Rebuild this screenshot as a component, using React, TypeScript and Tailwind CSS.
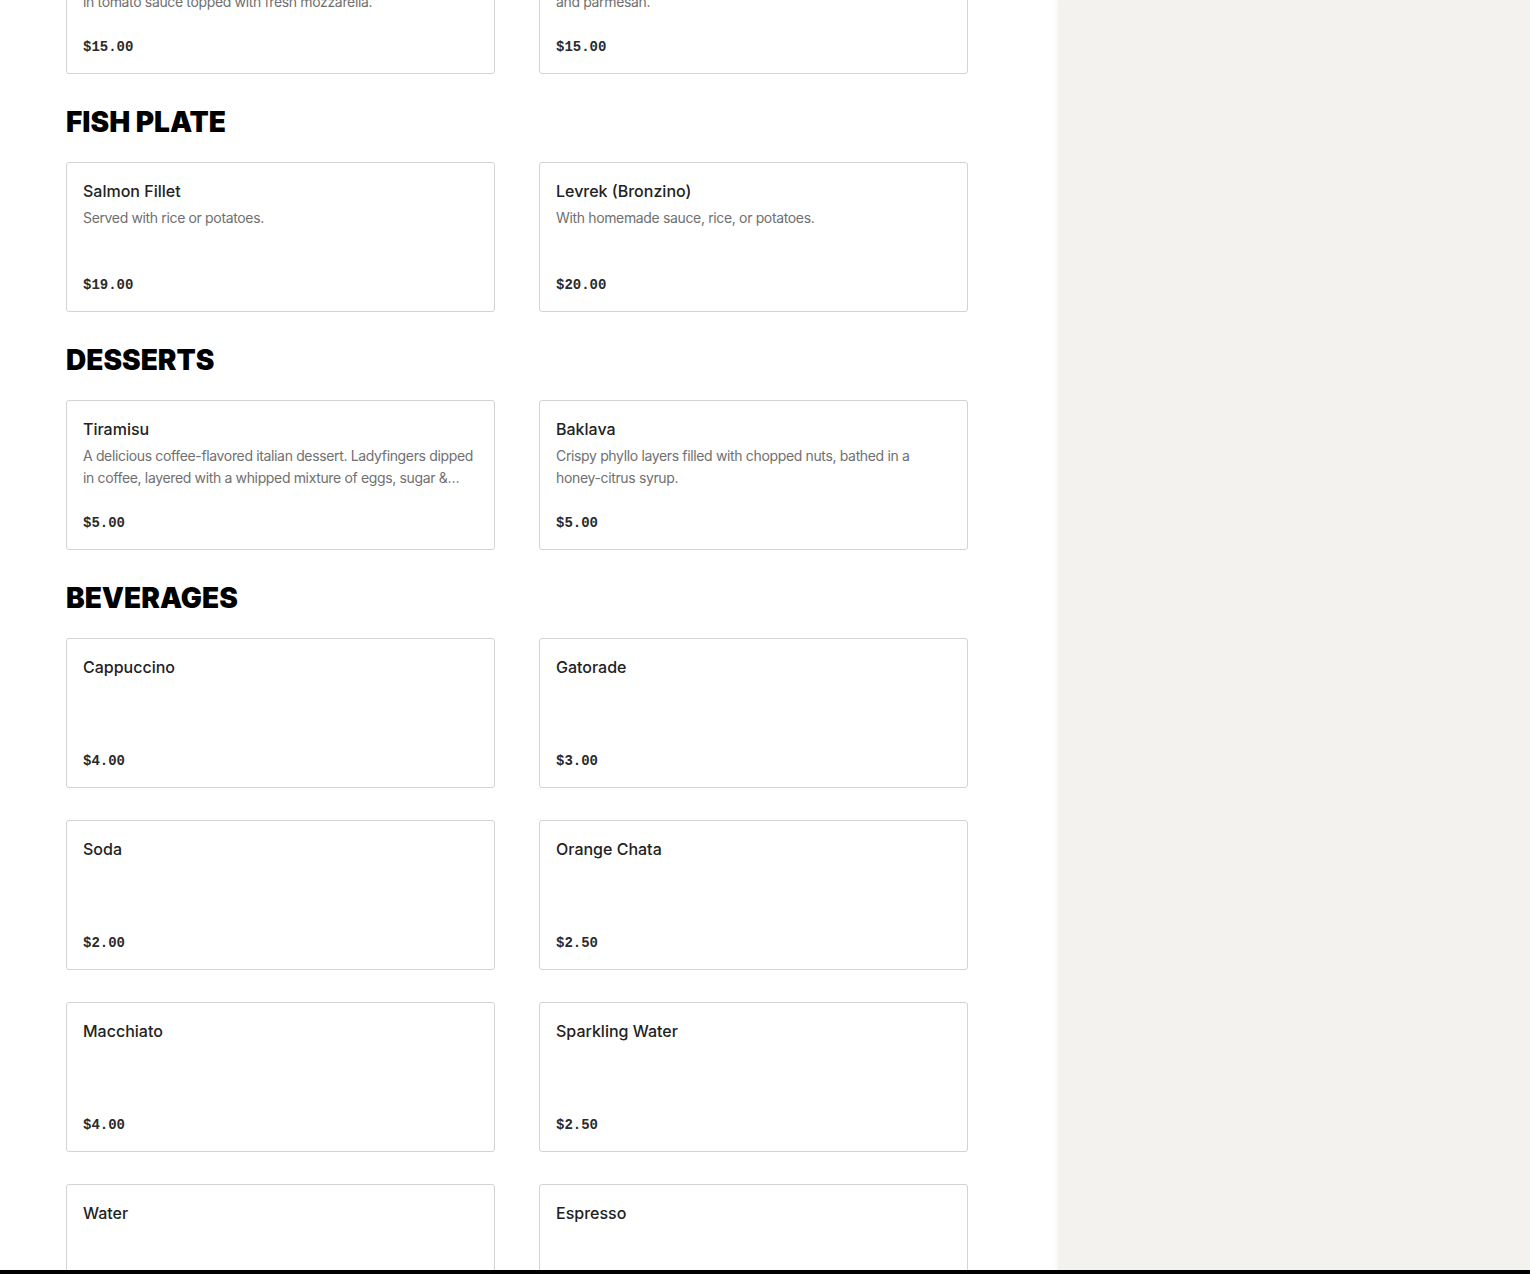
import React from "react";

interface MenuItem {
  name: string;
  description?: string;
  price: string;
}

interface MenuSection {
  title?: string;
  items: MenuItem[];
}

const sections: MenuSection[] = [
  {
    items: [
      {
        name: "Chicken Parmigiana",
        description: "Breaded chicken breast, fried until golden and baked\nin tomato sauce topped with fresh mozzarella.",
        price: "$15.00",
      },
      {
        name: "Fettuccine Alfredo",
        description: "Fresh fettuccine tossed in a rich cream sauce, butter\nand parmesan.",
        price: "$15.00",
      },
    ],
  },
  {
    title: "FISH PLATE",
    items: [
      { name: "Salmon Fillet", description: "Served with rice or potatoes.", price: "$19.00" },
      { name: "Levrek (Bronzino)", description: "With homemade sauce, rice, or potatoes.", price: "$20.00" },
    ],
  },
  {
    title: "DESSERTS",
    items: [
      {
        name: "Tiramisu",
        description:
          "A delicious coffee-flavored italian dessert. Ladyfingers dipped in coffee, layered with a whipped mixture of eggs, sugar & mascarpone cheese, flavored with cocoa.",
        price: "$5.00",
      },
      {
        name: "Baklava",
        description: "Crispy phyllo layers filled with chopped nuts, bathed in a honey-citrus syrup.",
        price: "$5.00",
      },
    ],
  },
  {
    title: "BEVERAGES",
    items: [
      { name: "Cappuccino", price: "$4.00" },
      { name: "Gatorade", price: "$3.00" },
      { name: "Soda", price: "$2.00" },
      { name: "Orange Chata", price: "$2.50" },
      { name: "Macchiato", price: "$4.00" },
      { name: "Sparkling Water", price: "$2.50" },
      { name: "Water", price: "$1.50" },
      { name: "Espresso", price: "$3.00" },
    ],
  },
];

function ItemCard({ item }: { item: MenuItem }) {
  return (
    <div className="flex h-[150px] flex-col rounded-[3px] border border-[#d3d3d3] bg-white p-4">
      <h3 className="text-base font-medium leading-6 text-[#222222]">{item.name}</h3>
      {item.description && (
        <p className="mt-1 line-clamp-2 whitespace-pre-line text-sm leading-[22px] tracking-[-0.025em] text-[#707070]">
          {item.description}
        </p>
      )}
      <span
        className="mt-auto text-sm font-semibold leading-5 text-[#2a2a2a]"
        style={{ fontFamily: '"Liberation Mono", "DejaVu Sans Mono", monospace' }}
      >
        {item.price}
      </span>
    </div>
  );
}

export default function App() {
  return (
    <div
      className="flex h-screen overflow-hidden bg-white"
      style={{ fontFamily: 'Inter, "Liberation Sans", sans-serif' }}
    >
      <main className="w-[1058px] shrink-0 pl-[66px] pr-[90px]">
        <div className="-mt-[76px]">
          {sections.map((section, i) => (
            <section key={i}>
              {section.title && (
                <h2 className="mb-6 mt-8 text-[28px] font-black leading-8 text-black">{section.title}</h2>
              )}
              <div className="grid grid-cols-2 gap-x-[44px] gap-y-8">
                {section.items.map((item) => (
                  <ItemCard key={item.name} item={item} />
                ))}
              </div>
            </section>
          ))}
        </div>
      </main>
      <aside className="flex-1 bg-[#f3f2ee] shadow-[-2px_0_4px_rgba(0,0,0,0.04)]" />
      <div className="fixed inset-x-0 bottom-0 h-[4px] bg-black" />
    </div>
  );
}
